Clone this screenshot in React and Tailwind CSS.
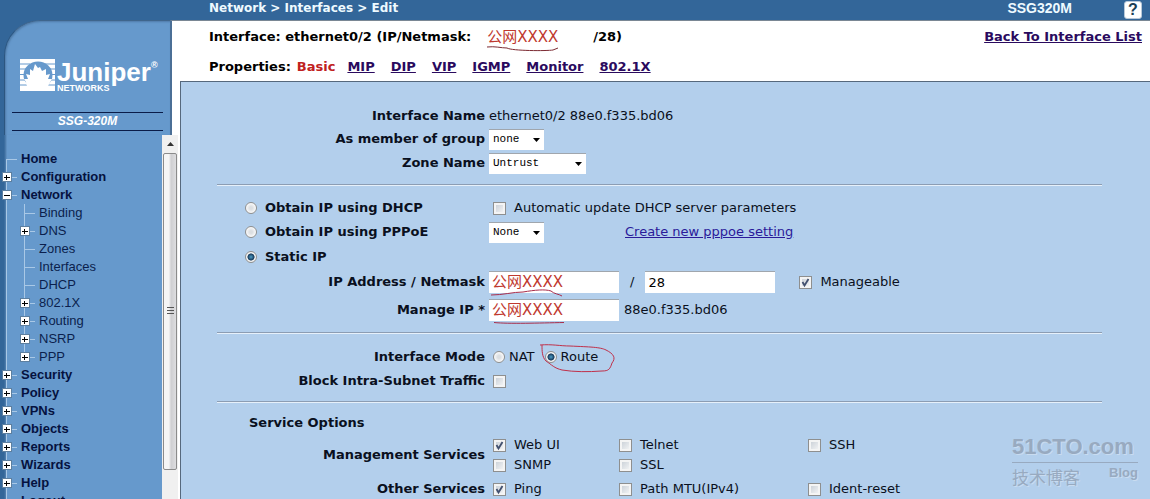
import React from 'react';

const SANS = "font-['DejaVu_Sans','Noto_Sans_CJK_SC',sans-serif]";

const TREE = [
  { name: 'Home' },
  { name: 'Configuration', box: 'plus' },
  {
    name: 'Network',
    box: 'minus',
    children: [
      { name: 'Binding' },
      { name: 'DNS', box: 'plus' },
      { name: 'Zones' },
      { name: 'Interfaces' },
      { name: 'DHCP' },
      { name: '802.1X', box: 'plus' },
      { name: 'Routing', box: 'plus' },
      { name: 'NSRP', box: 'plus' },
      { name: 'PPP', box: 'plus' },
    ],
  },
  { name: 'Security', box: 'plus' },
  { name: 'Policy', box: 'plus' },
  { name: 'VPNs', box: 'plus' },
  { name: 'Objects', box: 'plus' },
  { name: 'Reports', box: 'plus' },
  { name: 'Wizards', box: 'plus' },
  { name: 'Help', box: 'plus' },
  { name: 'Logout' },
];

function Branch({ box, first, last }) {
  return (
    <svg width="21" height="18" viewBox="0 0 21 18" className="shrink-0" shapeRendering="crispEdges">
      <path
        d={`M6.5 ${first ? 9 : 0}V${last ? 9 : 18}M6.5 9.5H17`}
        stroke="#a9c8e6"
        fill="none"
      />
      {box && <rect x="2.5" y="4.5" width="9" height="9" fill="#fff" stroke="#5d7f9f" />}
      {box && <path d="M4 9.5H10" stroke="#000" />}
      {box === 'plus' && <path d="M6.5 7V12" stroke="#000" />}
    </svg>
  );
}

function Node({ item, first, last, nested }) {
  return (
    <li>
      <div className="flex h-[18px] items-center">
        {item.box ? (
          <button type="button" aria-label={`Toggle ${item.name}`} className="block">
            <Branch box={item.box} first={first} last={last} />
          </button>
        ) : (
          <Branch first={first} last={last} />
        )}
        <a href="#" className={nested ? 'text-[#0b1f4d]' : 'font-bold text-[#05123f]'}>
          {item.name}
        </a>
      </div>
      {item.children && (
        <ul className="ml-[6px] border-l border-[#a9c8e6] pl-[11px]">
          {item.children.map((c, i) => (
            <Node key={c.name} item={c} nested last={i === item.children.length - 1} />
          ))}
        </ul>
      )}
    </li>
  );
}

function Logo() {
  return (
    <div className="flex h-8 text-white">
      <svg width="35" height="32" viewBox="0 0 35 32" className="shrink-0">
        <rect width="35" height="32" fill="#fff" />
        <path d="M0 5H10M25 5H35M0 10H6M29 10H35M0 15.5H4M31 15.5H35M0 21H5M30 21H35M0 26H7M28 26H35" stroke="#6699cc" />
        <ellipse cx="18" cy="16" rx="14.5" ry="13.5" fill="#6699cc" />
        <path
          d="M10 32C9 29 6 27 6 23L4 20L8 20L6 15L10 16L10 10L13 12L15 5L18 9L20 8L22 12L26 10L26 16L30 15L28 20L32 20L29 25C28 28 26 29 26 32Z"
          fill="#fff"
        />
      </svg>
      <div className="ml-[2px] flex flex-col">
        <div className="flex h-[25px] items-start text-[26px] leading-[26px] font-bold">
          Juniper<span className="text-[9px] leading-3">®</span>
        </div>
        <div className="text-[9px] leading-[8px] font-bold">NETWORKS</div>
      </div>
    </div>
  );
}

function Sidebar() {
  return (
    <aside className="flex w-[180px] shrink-0 flex-col font-['Liberation_Sans',sans-serif]">
      <div className="flex h-[115px] shrink-0 bg-[linear-gradient(90deg,#336699_50%,#fff_50%)]">
        <div className="ml-1 flex flex-1 flex-col rounded-tl-[36px] border-t border-l border-t-[#3f658c] border-l-[#2c5680] bg-[#6699cc] pt-[38px] shadow-[inset_1px_1px_2px_#4f7ba8]">
          <div className="pl-[15px]">
            <Logo />
          </div>
          <div className="mt-[21px] mr-[7px] ml-[7px] border-y border-[#0a1c48] text-center text-xs leading-[17px] font-bold text-white italic">
            SSG-320M
          </div>
        </div>
        <div className="w-[10px] border-t border-l-2 border-t-[#7a8794] border-l-[#4b6f96] bg-white" />
      </div>
      <div className="flex min-h-0 flex-1 bg-[linear-gradient(90deg,#336699_4px,#5583b2_6px,#6699cc_7px)]">
        <nav className="min-w-0 flex-1 overflow-hidden pt-[15px] text-[13px]">
          <ul>
            {TREE.map((n, i) => (
              <Node key={n.name} item={n} first={i === 0} />
            ))}
          </ul>
        </nav>
        <div className="flex w-[18px] flex-col border-r-2 border-white bg-[#f0f0f0]">
          <button type="button" aria-label="Scroll up" className="flex h-[18px] shrink-0 items-center justify-center">
            <svg width="7" height="4" viewBox="0 0 7 4">
              <path d="M0 4L3.5 0L7 4Z" fill="#333" />
            </svg>
          </button>
          <div className="mx-px flex basis-[87%] items-center justify-center rounded-[2px] border border-[#8b8b8b] bg-[linear-gradient(90deg,#f5f5f5_40%,#cfcfd2_60%,#dedee0)]">
            <svg width="7" height="8" viewBox="0 0 7 8" shapeRendering="crispEdges">
              <path d="M0 .5H7M0 3.5H7M0 6.5H7" stroke="#555" />
            </svg>
          </div>
        </div>
      </div>
    </aside>
  );
}

function Check({ checked, label }) {
  return (
    <label className="flex items-center gap-2">
      <span className="grid size-[13px] shrink-0">
        <input
          type="checkbox"
          defaultChecked={checked}
          className="peer col-start-1 row-start-1 size-[13px] appearance-none border border-[#8e8f8f] bg-[linear-gradient(135deg,#c3cad2,#fafafa)] shadow-[inset_0_0_0_2px_#f4f4f4]"
        />
        <svg
          viewBox="0 0 13 13"
          className="pointer-events-none invisible col-start-1 row-start-1 size-[13px] peer-checked:visible"
        >
          <path d="M3.5 6L5.5 9.5L9.5 3" fill="none" stroke="#42506f" strokeWidth="1.8" />
        </svg>
      </span>
      {label}
    </label>
  );
}

function Radio({ name, checked, label, className }) {
  return (
    <label className={`flex items-center ${className}`}>
      <input
        type="radio"
        name={name}
        defaultChecked={checked}
        className="size-3 shrink-0 appearance-none rounded-full border border-[#8e8f8f] bg-[radial-gradient(circle,#dcdfe2_20%,#fbfbfb_70%)] checked:bg-[radial-gradient(circle,#3f86ad_10%,#173a5c_45%,#f4f4f4_55%)]"
      />
      {label}
    </label>
  );
}

function Select({ id, label, value, className }) {
  return (
    <span className="relative inline-flex">
      <select
        id={id}
        aria-label={label}
        className={`h-[21px] appearance-none border-t border-[#a0a6ad] bg-white pl-1 font-['Liberation_Mono',monospace] text-[11px] text-black ${className}`}
      >
        <option>{value}</option>
      </select>
      <svg width="7" height="4" viewBox="0 0 7 4" className="pointer-events-none absolute top-[9px] right-1">
        <path d="M0 0H7L3.5 4Z" fill="#000" />
      </svg>
    </span>
  );
}

function Field({ id, label, value, red, children }) {
  return (
    <span className="relative inline-flex">
      <input
        id={id}
        aria-label={label}
        defaultValue={value}
        className={`h-[22px] w-[130px] border-t border-[#a0a6ad] bg-white px-[3px] ${red ? 'text-[15px] text-[#c0392f]' : 'text-black'}`}
      />
      {children}
    </span>
  );
}

function Row({ label, id, className = 'h-6', children }) {
  return (
    <div className={`grid grid-cols-[268px_1fr] items-center gap-x-1 ${className}`}>
      <label htmlFor={id} className="text-right font-bold">
        {label}
      </label>
      <div className="flex items-center">{children}</div>
    </div>
  );
}

const Rule = ({ className }) => (
  <hr className={`h-[2px] border-t border-b border-t-[#8c9db3] border-b-[#e6f0fa] ${className}`} />
);

const TABS = ['MIP', 'DIP', 'VIP', 'IGMP', 'Monitor', '802.1X'];

function PageHead() {
  return (
    <div className="h-[60px] pt-1 pr-2 pl-[29px] font-bold">
      <div className="flex h-6 items-center justify-between">
        <div className="flex items-center">
          Interface: ethernet0/2 (IP/Netmask:
          <span className="relative ml-4 w-[106px] text-[15px] font-normal text-[#c0392f]">
            公网XXXX
            <svg width="76" height="6" viewBox="0 0 76 6" className="absolute top-5 left-0">
              <path d="M0 1C8 0 14 2 20 2C25 5 60 5 66 4L71 2" fill="none" stroke="#7c2b33" />
            </svg>
          </span>
          /28)
        </div>
        <a href="#" className="text-[#2a0a5e] underline">
          Back To Interface List
        </a>
      </div>
      <div className="mt-[6px] flex h-6 items-center">
        Properties:
        <span className="ml-[6px] text-[#c02020]">Basic</span>
        <nav className="ml-3 flex gap-4">
          {TABS.map((t) => (
            <a key={t} href="#" className="text-[#2a0a5e] underline">
              {t}
            </a>
          ))}
        </nav>
      </div>
    </div>
  );
}

function Watermark() {
  return (
    <div className="absolute right-3 bottom-2 w-[126px] text-[#98aac0] [text-shadow:1px_1px_0_#c9dcf0]">
      <div className="border-b border-[#98aac0] font-['Liberation_Sans',sans-serif] text-[22px] leading-[30px] font-bold">
        51CTO.com
      </div>
      <div className="flex justify-between">
        <span className="font-['Noto_Sans_CJK_SC',sans-serif] text-[17px] leading-7">技术博客</span>
        <span className="font-['Liberation_Sans',sans-serif] text-[13px] leading-5 font-bold">Blog</span>
      </div>
    </div>
  );
}

export default function App() {
  return (
    <div className={`flex h-screen flex-col overflow-hidden bg-[#336699] text-[13px] ${SANS}`}>
      <header className="flex h-5 shrink-0 items-center justify-between pr-2 pl-[209px] font-bold text-[#eefaff]">
        <h1 className="-mt-1 text-xs">Network &gt; Interfaces &gt; Edit</h1>
        <div className="flex items-center">
          <span className="-mt-1 mr-[52px] font-['Liberation_Sans',sans-serif] text-[14px]">SSG320M</span>
          <button
            type="button"
            aria-label="Help"
            className="flex size-[18px] items-center justify-center rounded-[3px] border border-[#b8c8d8] bg-white font-['Liberation_Sans',sans-serif] text-[16px] leading-4 text-[#1c3e55]"
          >
            ?
          </button>
        </div>
      </header>
      <div className="flex min-h-0 flex-1">
        <Sidebar />
        <div className="flex min-w-0 flex-1 flex-col border-t border-[#7a8794] bg-white">
          <PageHead />
          <main className="relative min-h-0 flex-1 overflow-hidden border-t border-l border-[#56687c] bg-[#b3cfec] pt-[23px] pr-12 pl-9 text-[#0a1020]">
            <Row label="Interface Name" className="h-[22px]">
              ethernet0/2 88e0.f335.bd06
            </Row>
            <Row label="As member of group" id="group">
              <Select id="group" value="none" className="w-[55px]" />
            </Row>
            <Row label="Zone Name" id="zone">
              <Select id="zone" value="Untrust" className="w-[97px]" />
            </Row>
            <Rule className="mt-[9px] mb-[10px]" />
            <div className="grid h-6 grid-cols-[268px_1fr] items-center gap-x-1">
              <Radio name="ip" label="Obtain IP using DHCP" className="ml-7 gap-2 font-bold" />
              <div className="ml-1">
                <Check label="Automatic update DHCP server parameters" />
              </div>
            </div>
            <div className="grid h-6 grid-cols-[268px_1fr] items-center gap-x-1">
              <Radio name="ip" label="Obtain IP using PPPoE" className="ml-7 gap-2 font-bold" />
              <div className="flex items-center">
                <Select label="PPPoE profile" value="None" className="w-[55px]" />
                <a href="#" className="ml-[81px] text-[#2a1a9a] underline">
                  Create new pppoe setting
                </a>
              </div>
            </div>
            <Radio name="ip" checked label="Static IP" className="ml-7 h-[26px] gap-2 font-bold" />
            <Row label="IP Address / Netmask" id="addr">
              <Field id="addr" value="公网XXXX" red>
                <svg width="76" height="8" viewBox="0 0 76 8" className="pointer-events-none absolute top-[18px] left-0">
                  <path d="M2 6C14 6 24 3 34 3C46 1 56 0 62 2C65 5 70 5 73 7" fill="none" stroke="#a82c4a" />
                </svg>
              </Field>
              <span className="mx-[11px]">/</span>
              <Field label="Netmask" value="28" />
              <span className="ml-6">
                <Check checked label="Manageable" />
              </span>
            </Row>
            <Row label="Manage IP *" id="manage" className="mt-1 h-6">
              <Field id="manage" value="公网XXXX" red>
                <svg width="76" height="4" viewBox="0 0 76 4" className="pointer-events-none absolute top-[22px] left-0">
                  <path d="M5 1.5C20 3 50 2 75 1.5" fill="none" stroke="#a82c4a" />
                </svg>
              </Field>
              <span className="ml-[5px]">88e0.f335.bd06</span>
            </Row>
            <Rule className="mt-[10px] mb-[11px]" />
            <Row label="Interface Mode">
              <Radio name="mode" label="NAT" className="ml-1 gap-1" />
              <span className="relative ml-[10px]">
                <Radio name="mode" checked label="Route" className="gap-1" />
                <svg width="76" height="30" viewBox="0 0 76 30" className="pointer-events-none absolute -top-[4px] -left-[5px]">
                  <path
                    d="M0 2C12 1 20 3 30 3C50 4 60 4 66 7C74 11 76 15 72 20C70 26 69 28 62 28C48 29 34 29 22 27C14 25 12 22 6 18C2 14 2 8 2 2"
                    fill="none"
                    stroke="#c0304a"
                  />
                </svg>
              </span>
            </Row>
            <div className="grid h-6 grid-cols-[268px_1fr] items-center gap-x-1">
              <label htmlFor="block" className="text-right font-bold">
                Block Intra-Subnet Traffic
              </label>
              <input
                id="block"
                type="checkbox"
                className="ml-1 size-[13px] appearance-none border border-[#8e8f8f] bg-[linear-gradient(135deg,#c3cad2,#fafafa)] shadow-[inset_0_0_0_2px_#f4f4f4]"
              />
            </div>
            <Rule className="my-2" />
            <h2 className="ml-8 h-6 leading-6 font-bold">Service Options</h2>
            <div className="grid grid-cols-[268px_1fr] items-center gap-x-1">
              <span className="text-right font-bold">Management Services</span>
              <div className="ml-1 grid auto-rows-[20px] grid-cols-[126px_189px_1fr] items-center">
                <Check checked label="Web UI" />
                <Check label="Telnet" />
                <Check label="SSH" />
                <Check label="SNMP" />
                <Check label="SSL" />
              </div>
            </div>
            <div className="mt-1 grid grid-cols-[268px_1fr] items-center gap-x-1">
              <span className="text-right font-bold">Other Services</span>
              <div className="ml-1 grid auto-rows-[20px] grid-cols-[126px_189px_1fr] items-center">
                <Check checked label="Ping" />
                <Check label="Path MTU(IPv4)" />
                <Check label="Ident-reset" />
              </div>
            </div>
            <Watermark />
          </main>
        </div>
      </div>
    </div>
  );
}
